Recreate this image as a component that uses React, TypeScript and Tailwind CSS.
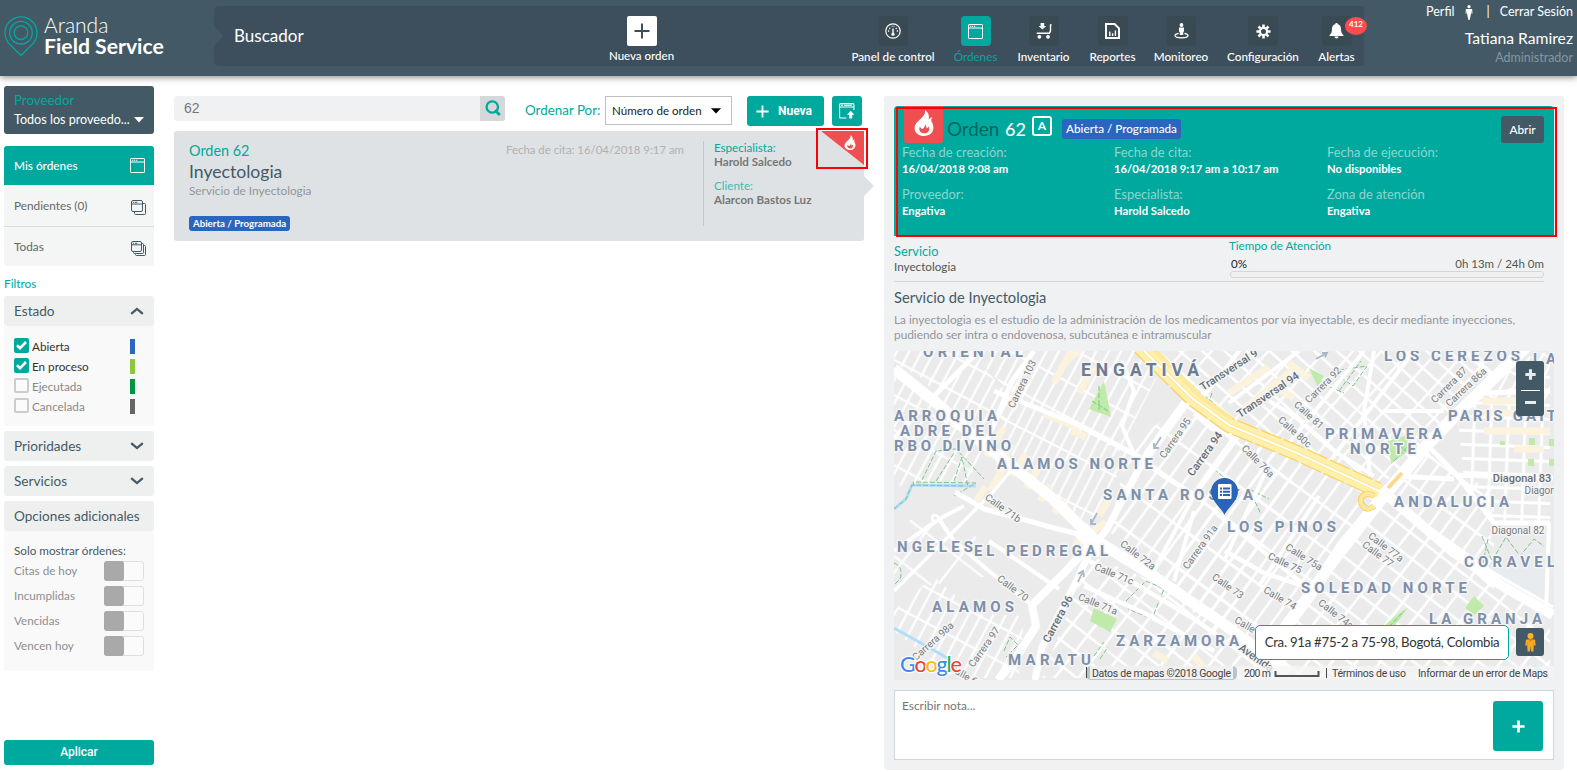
import type { ReactNode } from "react";

/* ---------- icons ---------- */

function WindowIcon({ size = 15, copies = 0 }: { size?: number; copies?: number }) {
  return (
    <svg width={size} height={size} viewBox="0 0 15 15" fill="none" stroke="currentColor" strokeWidth="1">
      {copies === 0 && (
        <>
          <rect x="0.5" y="0.5" width="14" height="14" rx="0.6" />
          <path d="M0.5 4H14.5" />
          <path d="M2 2.3h1.2M4 2.3h1.2M6 2.3h1.2" strokeWidth="1.1" />
        </>
      )}
      {copies > 0 && (
        <>
          <rect x="0.5" y="0.5" width={copies === 1 ? 11 : 10} height={copies === 1 ? 11 : 10} rx="1.5" />
          <path d={copies === 1 ? "M0.5 4h11" : "M0.5 3.8h10"} />
          <path d="M2 2.3h1M3.8 2.3h2.5" />
          {copies === 1 && <path d="M12 3.5h1.5a1 1 0 0 1 1 1v9a1 1 0 0 1-1 1h-9a1 1 0 0 1-1-1V12" />}
          {copies === 2 && (
            <>
              <path d="M10.8 2.5h.7a1 1 0 0 1 1 1v8a1 1 0 0 1-1 1h-8a1 1 0 0 1-1-1v-.8" />
              <path d="M12.8 4.5h.7a1 1 0 0 1 1 1v8a1 1 0 0 1-1 1h-8a1 1 0 0 1-1-1v-.8" />
            </>
          )}
        </>
      )}
    </svg>
  );
}

function GaugeIcon() {
  return (
    <svg width="16" height="16" viewBox="0 0 16 16" fill="none" stroke="#fff">
      <circle cx="8" cy="8" r="7.2" strokeWidth="1.2" />
      <path d="M8 5.5v5" strokeWidth="1.4" />
      <circle cx="8" cy="11.2" r="1.6" fill="#fff" stroke="none" />
      <path d="M3 8h1.2M11.8 8H13M4.3 5l1 .8M11.7 5l-1 .8M6.8 3.3h.7M8.6 3.3h.7" strokeWidth="1.3" />
    </svg>
  );
}

function CartIcon() {
  return (
    <svg width="16" height="16" viewBox="0 0 16 16" fill="#fff">
      <path d="M4.6 0h3.6v3h2L6.4 6.4 2.6 3h2z" />
      <path d="M15.6 1.2h-1.8v6.6l-.8 1.6H.8v1.6h13l1.4-2.8V2.4h.4z" />
      <circle cx="3.4" cy="13.8" r="1.9" />
      <circle cx="12" cy="13.8" r="1.9" />
    </svg>
  );
}

function ReportIcon() {
  return (
    <svg width="15" height="16" viewBox="0 0 15 16" fill="none" stroke="#fff" strokeWidth="2">
      <path d="M1 1h8.6L14 5.4V15H1z" />
      <path d="M4.8 8.5V13M7.6 10.2V13M10.4 7.6V13" strokeWidth="1.4" />
    </svg>
  );
}

function MonitorIcon() {
  return (
    <svg width="15" height="16" viewBox="0 0 15 16" fill="#fff">
      <circle cx="7.5" cy="2" r="1.9" />
      <path d="M5 4.6h5v4.2H9.2V12H5.8V8.8H5z" />
      <path d="M4.6 10.4C2.4 10.8 1 11.6 1 12.6c0 1.400 2.800 2.300 6.500 2.300s6.500-.9 6.500-2.300c0-1-1.400-1.800-3.600-2.200" fill="none" stroke="#fff" strokeWidth="1.3" />
    </svg>
  );
}

function GearIcon() {
  return (
    <svg width="15" height="15" viewBox="0 0 15 15" fill="none" stroke="#fff">
      <circle cx="7.5" cy="7.5" r="3.6" strokeWidth="2.2" />
      <path
        d="M7.5 .4v2.800M7.5 11.800v2.800M.4 7.500h2.800M11.800 7.500h2.800M2.500 2.500l1.900 1.900M10.600 10.600l1.900 1.900M2.500 12.500l1.900-1.900M10.600 4.400l1.900-1.900"
        strokeWidth="2.6"
      />
    </svg>
  );
}

function BellIcon() {
  return (
    <svg width="15" height="16" viewBox="0 0 15 16" fill="#fff">
      <path d="M7.5 0c.8 0 1.200.5 1.200 1.200 2.100.5 3.300 2.200 3.300 4.600 0 3.400.8 4.900 2.500 6.400v.8H.5v-.8C2.200 10.700 3 9.200 3 5.800c0-2.400 1.200-4.100 3.300-4.600C6.300.5 6.700 0 7.500 0z" />
      <path d="M5.400 13.600h4.200c-.2 1.300-1 2-2.100 2s-1.900-.7-2.100-2z" />
    </svg>
  );
}

function PersonIcon() {
  return (
    <svg width="8" height="15" viewBox="0 0 8 15" fill="#fff">
      <circle cx="4" cy="1.7" r="1.6" />
      <path d="M.9 4h6.200l.4 4.500H6.300V6H6v2.800L4.600 15H3.400L2 8.800V6h-.3v2.500H.5z" />
    </svg>
  );
}

function FlameIcon({ w, h, hole }: { w: number; h: number; hole: string }) {
  return (
    <svg width={w} height={h} viewBox="0 0 20 26">
      <path
        d="M11 0c.6 2.500-.4 4.800-3 7.600C4.600 11.200.6 13.400.6 18.200.6 22.800 4.600 26 10 26s9.400-3.200 9.400-8.200c0-3-1.200-4.800-2-6.600-.3-1.500.1-3 .9-4-1.700.3-3.200 1.400-3.700 3.200C15.600 6.400 14.600 2.400 11 0z"
        fill="#fff"
      />
      <path
        d="M6 16.600c-1.300 2.200-.8 4.800 1.100 5.900 1.800 1 4.600 1.100 6.300-.1 1.900-1.300 2.300-3.700 1.300-5.800-.7.9-1.300 1.500-2.200 1.900.1-1.700-.4-2.900-1.500-3.900.1 1.800-.8 3.200-2.400 4.500-1.200-.3-2.200-1.100-2.600-2.500z"
        fill={hole}
      />
    </svg>
  );
}

function Chevron({ up = false }: { up?: boolean }) {
  return (
    <svg width="14" height="8" viewBox="0 0 14 8" fill="none" stroke="#455a64" strokeWidth="2.3">
      <path d={up ? "M1.200 6.800 7 1.900l5.800 4.900" : "M1.200 1.200 7 6.100l5.800-4.900"} />
    </svg>
  );
}

function PlusIcon({ size, width, color }: { size: number; width: number; color: string }) {
  return (
    <svg width={size} height={size} viewBox="0 0 16 16" fill="none" stroke={color} strokeWidth={width}>
      <path d="M8 0.5v15M0.5 8h15" />
    </svg>
  );
}

/* ---------- header ---------- */

function NavItem({ label, width, active = false, children }: { label: string; width: string; active?: boolean; children: ReactNode }) {
  return (
    <div className={`flex flex-col items-center ${width}`}>
      <div className={`flex h-[30px] w-[30px] items-center justify-center rounded-[4px] ${active ? "bg-[#00a99d]" : "bg-[#394a53]"} text-white`}>
        {children}
      </div>
      <span className={`mt-[2px] text-[11.7px] leading-[16px] whitespace-nowrap ${active ? "text-[#00a99d]" : "font-medium text-white"}`}>{label}</span>
    </div>
  );
}

function Header() {
  return (
    <header className="relative z-10 flex h-[76px] bg-[#435a66] shadow-[0_1px_7px_rgba(0,0,0,0.5)]">
      <div className="flex w-[214px] items-start pt-4 pl-1">
        <svg width="34" height="41" viewBox="0 0 34 41" fill="none" stroke="#00a99d" strokeWidth="1.3">
          <path d="M17 39.500 6.300 28.800A16 16 0 1 1 27.700 28.800z" />
          <circle cx="17" cy="16.7" r="11.3" />
          <circle cx="17" cy="16.7" r="6.8" />
        </svg>
        <div className="-mt-[2px] ml-[6px] flex flex-col text-white">
          <span className="text-[21px] leading-[22px] font-light">Aranda</span>
          <span className="text-[21.200px] leading-[20px] font-bold">Field Service</span>
        </div>
      </div>
      <div className="mt-[6px] flex h-[60px] w-[1150px] rounded-l-[5px] bg-[#3d4f5d]">
        <svg width="10" height="60" viewBox="0 0 10 60">
          <path d="M0 20 9.500 30 0 40z" fill="#435a66" />
        </svg>
        <div className="w-[385px] pt-[18px] pl-[10px] text-[17px] leading-6 text-white">Buscador</div>
        <div className="flex w-[65px] flex-col items-center pt-[10px]">
          <div className="flex h-[30px] w-[30px] items-center justify-center rounded-[2px] bg-white">
            <PlusIcon size={16} width={2} color="#3d4f5d" />
          </div>
          <span className="mt-[2px] text-[11.5px] leading-4 font-medium whitespace-nowrap text-white">Nueva orden</span>
        </div>
        <nav className="ml-[178px] flex gap-5 pt-[10px]">
          <NavItem label="Panel de control" width="w-[82px]"><GaugeIcon /></NavItem>
          <NavItem label="Órdenes" width="w-[43px]" active><WindowIcon /></NavItem>
          <NavItem label="Inventario" width="w-[53px]"><CartIcon /></NavItem>
          <NavItem label="Reportes" width="w-[45px]"><ReportIcon /></NavItem>
          <NavItem label="Monitoreo" width="w-[52px]"><MonitorIcon /></NavItem>
          <NavItem label="Configuración" width="w-[72px]"><GearIcon /></NavItem>
          <div className="relative">
            <NavItem label="Alertas" width="w-[35px]"><BellIcon /></NavItem>
            <span className="absolute top-[1px] left-[26px] h-[18px] w-[22px] rounded-[50%] bg-[#ff4b4f] text-center text-[8px] leading-[15px] font-bold text-white">412</span>
          </div>
        </nav>
      </div>
      <div className="flex flex-1 flex-col items-end pr-1 text-white">
        <div className="flex h-6 items-center text-[12.5px]">
          <span>Perfil</span>
          <span className="mr-[14px] ml-[10px]"><PersonIcon /></span>
          <span>|</span>
          <span className="ml-[10px]">Cerrar Sesión</span>
        </div>
        <span className="mt-[4px] text-[15.7px] leading-[20px]">Tatiana Ramirez</span>
        <span className="mt-[2px] text-[12.5px] leading-4 text-[#8496a1]">Administrador</span>
      </div>
    </header>
  );
}

/* ---------- sidebar ---------- */

const estados = [
  { label: "Abierta", on: true, bar: "bg-[#2a66bf]" },
  { label: "En proceso", on: true, bar: "bg-[#8dc63f]" },
  { label: "Ejecutada", on: false, bar: "bg-[#009444]" },
  { label: "Cancelada", on: false, bar: "bg-[#666666]" },
];
const opciones = ["Citas de hoy", "Incumplidas", "Vencidas", "Vencen hoy"];

function PanelTitle({ title, children }: { title: string; children?: ReactNode }) {
  return (
    <div className="flex h-[30px] items-center justify-between rounded-[3px] bg-[#eef0f0] pr-[10px] pl-[10px] text-[13.6px] text-[#455a64]">
      <span className="whitespace-nowrap">{title}</span>
      {children}
    </div>
  );
}

function Sidebar() {
  return (
    <aside className="flex w-[150px] flex-col pt-[10px]">
      <div className="h-12 rounded-[3px] bg-[#435a66] px-[10px] pt-[5px]">
        <div className="text-[13.3px] leading-[19px] text-[#00a99d]">Proveedor</div>
        <div className="flex items-center justify-between text-[12.6px] leading-[19px] text-white">
          <span className="whitespace-nowrap">Todos los proveedo...</span>
          <svg width="10" height="6" viewBox="0 0 10 6"><path d="M0 0h10L5 5.500z" fill="#fff" /></svg>
        </div>
      </div>

      <div className="mt-3 flex flex-col overflow-hidden rounded-[3px] bg-[#f4f6f6] text-[11.8px] text-[#666]">
        <div className="flex h-[39px] items-center justify-between bg-[#00a99d] pr-[9px] pl-[10px] font-medium text-white">
          <span>Mis órdenes</span>
          <WindowIcon />
        </div>
        <div className="flex h-[42px] items-center justify-between border-b border-[#d9dcdd] pr-2 pl-[10px]">
          <span>Pendientes (0)</span>
          <span className="mt-1 text-[#455a64]"><WindowIcon copies={1} /></span>
        </div>
        <div className="flex h-[39px] items-center justify-between pr-2 pl-[10px]">
          <span>Todas</span>
          <span className="mt-[3px] text-[#455a64]"><WindowIcon copies={2} /></span>
        </div>
      </div>

      <div className="mt-[10px] h-5 text-[11.8px] leading-4 text-[#00a99d]">Filtros</div>
      <PanelTitle title="Estado"><Chevron up /></PanelTitle>
      <div className="flex h-[100px] flex-col gap-[5px] bg-[#f9f9f9] pt-3 pr-[19px] pl-[10px]">
        {estados.map((e) => (
          <div key={e.label} className="flex h-[15px] items-center">
            {e.on ? (
              <span className="flex h-[15px] w-[15px] items-center justify-center rounded-[2px] bg-[#00a99d]">
                <svg width="11" height="9" viewBox="0 0 11 9" fill="none" stroke="#fff" strokeWidth="2.6"><path d="M1 4.300 4 7.200 10 1" /></svg>
              </span>
            ) : (
              <span className="h-[15px] w-[15px] rounded-[2px] border-2 border-[#ccc] bg-[#fbfbfb]" />
            )}
            <span className={`mt-[3px] ml-[3px] flex-1 text-[11.7px] ${e.on ? "text-[#333]" : "text-[#888]"}`}>{e.label}</span>
            <span className={`mt-[2px] h-[15px] w-[5px] ${e.bar}`} />
          </div>
        ))}
      </div>
      <div className="mt-[5px] flex flex-col gap-[5px]">
        <PanelTitle title="Prioridades"><Chevron /></PanelTitle>
        <PanelTitle title="Servicios"><Chevron /></PanelTitle>
        <PanelTitle title="Opciones adicionales" />
      </div>
      <div className="flex h-[140px] flex-col gap-[5px] bg-[#f9f9f9] px-[10px] pt-[10px] text-[11.7px]">
        <div className="-mb-[5px] h-5 leading-[19px] text-[#455a64]">Solo mostrar órdenes:</div>
        {opciones.map((o) => (
          <div key={o} className="flex h-5 items-center justify-between text-[#8e8e8e]">
            <span>{o}</span>
            <span className="h-5 w-10 rounded-[3px] border border-[#dedede] bg-[#fbfbfb]">
              <span className="-mt-px -ml-px block h-5 w-5 rounded-[3px] bg-[#a9a9a9]" />
            </span>
          </div>
        ))}
      </div>
      <button className="mt-[69px] h-[25px] rounded-[3px] bg-[#00a99d] pb-[2px] font-[Roboto] text-[12px] font-medium text-white">Aplicar</button>
    </aside>
  );
}

/* ---------- order list ---------- */

function OrderList() {
  return (
    <section className="w-[690px] pt-5">
      <div className="flex h-[30px] items-start">
        <div className="flex h-[25px] w-[331px] overflow-hidden rounded-[3px] bg-[#eff1f2]">
          <span className="flex-1 pl-[10px] font-['Liberation_Sans'] text-[14px] leading-6 text-[#777]">62</span>
          <span className="flex w-[25px] items-center justify-center bg-[#d5d7d9] pb-[2px]">
            <svg width="16" height="16" viewBox="0 0 16 16" fill="none" stroke="#00a99d">
              <circle cx="7.3" cy="7" r="5.7" strokeWidth="2.3" />
              <path d="M10 10.200 14.800 15" strokeWidth="2.8" />
            </svg>
          </span>
        </div>
        <span className="ml-[20px] w-[80px] pt-[3px] text-[13.4px] leading-[22px] whitespace-nowrap text-[#00a99d]">Ordenar Por:</span>
        <div className="flex h-[29px] w-[127px] items-center justify-between border border-[#bfbfbf] bg-white pr-[10px] pl-[6px] text-[11.6px] text-[#222]">
          <span>Número de orden</span>
          <svg width="10" height="6" viewBox="0 0 10 6"><path d="M0 .3h10L5 5.500z" fill="#000" /></svg>
        </div>
        <button className="ml-[15px] flex h-[30px] w-[77px] items-center rounded-[3px] bg-[#00a99d] pl-[9px] font-[Roboto] text-[12px] font-bold text-white">
          <PlusIcon size={13} width={2.2} color="#fff" />
          <span className="ml-[9px]">Nueva</span>
        </button>
        <button className="ml-2 flex h-[30px] w-[30px] items-center justify-center rounded-[3px] bg-[#00a99d]">
          <svg width="16" height="16" viewBox="0 0 16 16" fill="none" stroke="#fff" strokeWidth="1.1">
            <path d="M7.500 15H1.600a1 1 0 0 1-1-1V1.600a1 1 0 0 1 1-1h12.300a1 1 0 0 1 1 1V7M.6 4h14.300M2 2.300h2M5 2.300h8" />
            <path d="m11.700 7.800 3.700 4h-2.200V15.600h-3v-3.800H8z" fill="#fff" stroke="none" />
          </svg>
        </button>
      </div>

      <div className="relative mt-[5px] flex h-[110px] rounded-[3px] bg-[#dee2e5]">
        <div className="w-[250px] pt-[10px] pl-[15px]">
          <div className="text-[14.4px] leading-[19px] text-[#00a99d]">Orden 62</div>
          <div className="text-[17.6px] leading-[24px] text-[#435a66]">Inyectologia</div>
          <div className="text-[11.8px] leading-[14px] text-[#939598]">Servicio de Inyectologia</div>
          <div className="mt-[18px] flex h-[15px] w-[101px] items-center justify-center rounded-[3px] bg-[#2a66bf] text-[9.7px] font-bold whitespace-nowrap text-white">Abierta / Programada</div>
        </div>
        <div className="flex-1 pt-[12px] pr-[19px] text-right text-[11.4px] leading-[14px] text-[#b1b1b1]">Fecha de cita: 16/04/2018 9:17 am</div>
        <div className="mt-[10px] h-[85px] w-[161px] border-l border-[#c3c7ca] pl-[10px] text-[11.6px] leading-[14px]">
          <div className="text-[#00a99d]">Especialista:</div>
          <div className="font-bold text-[#777]">Harold Salcedo</div>
          <div className="mt-[10px] text-[#3dbbb1]">Cliente:</div>
          <div className="font-bold text-[#777]">Alarcon Bastos Luz</div>
        </div>
        <svg className="absolute top-0 right-0" width="43" height="34" viewBox="0 0 43 34"><path d="M0 0h43v34z" fill="#f04f51" /></svg>
        <span className="absolute top-1 right-[8px]"><FlameIcon w={12} h={15} hole="#f04f51" /></span>
        <svg className="absolute top-[45px] -right-[10px]" width="10" height="20" viewBox="0 0 10 20"><path d="M0 0 10 10 0 20z" fill="#dee2e5" /></svg>
        <span className="absolute -top-[3px] -right-1 h-[41px] w-[52px] border-2 border-[#f00]" />
      </div>
    </section>
  );
}

/* ---------- map ---------- */

type Area = { fill: string; points: string };
const areas: Area[] = [
  { fill: "url(#nw)", points: "0,0 75,0 125,55 90,94 25,25 0,12" },
  { fill: "url(#nw)", points: "75,0 245,0 262,28 238,75 225,100 120,45" },
  { fill: "url(#dense)", points: "95,80 125,50 235,102 205,160 190,175 158,147" },
  { fill: "url(#nw)", points: "0,25 90,95 75,130 0,135" },
  { fill: "url(#mid)", points: "235,95 291,51 331,75 400,107 400,130 330,290 258,224 215,180" },
  { fill: "url(#mid)", points: "330,75 486,142 450,194 416,244 365,320 331,274 270,225 300,150" },
  { fill: "url(#ne)", points: "245,0 599,0 533,94 486,135 403,100 331,66 298,45" },
  { fill: "url(#east)", points: "493,144 559,201 656,261 656,327 365,327 416,244" },
  { fill: "url(#ortho)", points: "563,60 656,20 656,170 600,172 570,128" },
  { fill: "url(#mid)", points: "495,140 533,100 565,128 600,135 600,240 559,201" },
  { fill: "url(#nw)", points: "620,10 656,0 656,50 590,50" },
  { fill: "url(#east)", points: "198,205 258,230 331,280 390,327 148,327 184,235" },
  { fill: "url(#nw)", points: "0,260 40,225 80,262 130,265 125,327 60,327 0,280" },
  { fill: "url(#wide)", points: "0,180 30,160 120,205 95,225 30,235 0,250" },
];

const shops = [
  "M170 12 190 -5M160 32l18-34M185 42l14-26M150 62l35 15M178 80l14 6",
  "M92 105l18-28M104 115l14-22M118 125l14-22M132 137l14-22M146 150l10-16M160 162l10-14M96 140l14-24M82 150l10-14",
  "M205 165l12-20M192 185l20-14M180 190l10 6",
  "M335 42l40-26M350 58l50-40M395 12l20 15M380 35l20 12",
  "M585 62h60M590 80h66M588 50h40M620 98h30",
  "M260 302l14 8M275 318l20 8M300 305l10 12",
];

const majorRoads: { d: string; w: number }[] = [
  { d: "M0 18 40 50 91 94 158 147 198 187 258 224 331 274 395 322", w: 11 },
  { d: "M186 178 200 192 210 200", w: 17 },
  { d: "M40 45 85 0M25 60 0 88M92 92 118 30 140 0", w: 5 },
  { d: "M291 51 254 101 213 178 196 200 184 227 166 262 148 296 141 329", w: 7 },
  { d: "M198 192 170 222 138 254 142 275 120 310 104 329", w: 8 },
  { d: "M61 141 90 158 124 167 160 177 196 186", w: 5 },
  { d: "M0 240 60 180 100 140 118 118", w: 3.5 },
  { d: "M70 155 45 168 60 190 95 220 138 254M45 168 0 200M95 190l70 48", w: 4 },
  { d: "M100 40 130 52 180 72 240 103 270 125 310 150", w: 5 },
  { d: "M240 103 228 75 240 40 228 10", w: 4 },
  { d: "M300 63 318 78 345 85 300 145 258 222", w: 4 },
  { d: "M345 0 310 45M405 0 335 52M470 0 395 92M520 0 430 118", w: 4 },
  { d: "M375 50 400 65 440 100 480 125", w: 4 },
  { d: "M632 -4 559 67 533 94 493 141 449 194 416 244 393 274 358 329", w: 12 },
  { d: "M470 60 480 0M470 60 476 125M490 60h60", w: 4 },
  { d: "M493 144 559 201 610 236 659 264", w: 10 },
  { d: "M486 138 540 180 600 222 659 256", w: 3 },
  { d: "M533 94 563 124 659 127M563 124 600 172 656 172M500 125 560 128", w: 5 },
  { d: "M559 67 590 42 656 40M570 0 600 25", w: 5 },
  { d: "M331 200 370 222 425 240M320 160 415 238", w: 4.5 },
  { d: "M195 210 240 232 300 268 345 300M190 235 250 262 320 300", w: 4.5 },
  { d: "M300 160 280 230M372 120 330 210M425 145 365 235", w: 4 },
  { d: "M655 172 652 262", w: 4 },
];

const parks = [
  "M195 58 210 30 217 66z",
  "M200 257 223 268 216 281 196 270z",
  "M415 17 430 25 424 36z",
  "M494 90 512 85 517 98 497 113z",
  "M580 245 590 255 580 264 571 257z",
  "M505 262 514 257 498 278 490 275z",
  "M635 87h6v7h-6zM655 88h5v7h-5zM634 108h6v7h-6zM655 108h5v7h-5zM606 90h5v4h-5z",
];

const trails = [
  "M28 129 42 100 62 98 90 128M42 130l18-28M60 130l8-24 6 30M20 135 19 131 82 132 60 145",
  "M0 158 12 148 18 134 70 135M0 212q10 4 6 16l-6 6",
  "M205 35v24M198 50l16 10",
  "M436 36 450 42M438 20l35-5-14 20zM445 40l22-30",
  "M232 250 252 230 270 238 258 268 234 258M110 300l6-14 8 8-12 12M200 305l10-14M206 308l8-12",
  "M355 138 375 148M355 138l12 25",
  "M588 185 598 210 612 186 626 205 640 188 650 195M594 188l-6 28",
  "M500 90 512 100M500 110 517 92M495 276l15-16",
  "M310 44 322 54M318 42l-4 12M320 118l12 10-8 6",
];

const districts: [string, number, number, number][] = [
  ["ORIENTAL", 29, 6, 97],
  ["ARROQUIA", 0, 70, 100],
  ["ADRE DEL", 6, 85, 93],
  ["RBO DIVINO", 0, 100, 114],
  ["ALAMOS NORTE", 103, 118, 153],
  ["SANTA ROSITA", 209, 149, 147],
  ["NGELES", 3, 201, 73],
  ["EL PEDREGAL", 80, 205, 131],
  ["ALAMOS", 38, 261, 79],
  ["ZARZAMORA", 222, 295, 120],
  ["MARATU", 114, 314, 80],
  ["LOS CEREZOS", 490, 10, 133],
  ["LA", 639, 13, 20],
  ["PARIS GAIT", 554, 70, 105],
  ["PRIMAVERA", 431, 88, 114],
  ["NORTE", 456, 103, 63],
  ["ANDALUCIA", 500, 156, 112],
  ["LOS PINOS", 333, 181, 106],
  ["CORAVEL", 570, 216, 88],
  ["SOLEDAD NORTE", 407, 242, 163],
  ["LA GRANJA", 535, 273, 110],
];

const streets: [string, number, number, number, boolean?][] = [
  ["Carrera 103", 128, 33, -64],
  ["Transversal 9", 335, 19, -33, true],
  ["Transversal 94", 374, 44, -34, true],
  ["Carrera 92", 429, 34, -45],
  ["Calle 81", 415, 64, 42],
  ["Calle 80c", 401, 81, 42],
  ["Calle 76a", 364, 110, 45],
  ["Carrera 87", 555, 34, -45],
  ["Carrera 86a", 572, 36, -43],
  ["Carrera 95", 281, 87, -55],
  ["Carrera 94", 311, 103, -54, true],
  ["Calle 71b", 109, 157, 36],
  ["Calle 72a", 244, 204, 37],
  ["Calle 71c", 220, 223, 22],
  ["Carrera 91a", 306, 196, -54],
  ["Calle 70", 119, 237, 37],
  ["Calle 71a", 204, 253, 22],
  ["Carrera 96", 164, 268, -62, true],
  ["Carrera 98a", 39, 290, -42],
  ["Carrera 97", 90, 296, -55],
  ["Calle 73", 334, 235, 35],
  ["Calle 74", 386, 247, 30],
  ["Calle 74a", 442, 263, 38],
  ["Calle 75", 391, 212, 25],
  ["Calle 75a", 410, 206, 32],
  ["Calle 77a", 492, 196, 37],
  ["Calle 77", 484, 203, 37],
  ["Calle 72", 357, 277, 30],
  ["Avenida", 362, 307, 35, true],
  ["Diagonal 83", 628, 127, 0, true],
  ["Diagonal 83", 657, 139, 0],
  ["Diagonal 82", 624, 179, 0],
  ["Calle 66", 72, 325, 30],
];

function StreetGrid({ id, angle, a, b, w }: { id: string; angle: number; a: number; b: number; w: number }) {
  return (
    <pattern id={id} width={a} height={b} patternUnits="userSpaceOnUse" patternTransform={`rotate(${angle})`}>
      <path d={`M${a / 4} 0V${b}M0 ${b / 4}H${a}`} stroke="#fff" strokeWidth={w} fill="none" />
    </pattern>
  );
}

function MapDrawing() {
  return (
    <svg width="660" height="329" viewBox="0 0 660 329" className="block" fontFamily="Roboto, sans-serif">
      <defs>
        <StreetGrid id="nw" angle={28} a={11} b={31} w={2.2} />
        <StreetGrid id="dense" angle={27} a={10} b={44} w={2} />
        <StreetGrid id="mid" angle={36} a={14} b={34} w={2.5} />
        <StreetGrid id="ne" angle={42} a={21} b={15} w={2.3} />
        <StreetGrid id="east" angle={38} a={19} b={20} w={2.6} />
        <StreetGrid id="ortho" angle={2} a={17} b={14} w={2.8} />
        <StreetGrid id="wide" angle={38} a={42} b={38} w={2.2} />
      </defs>
      <rect width="660" height="329" fill="#ebebeb" />
      {areas.map((a, i) => <polygon key={i} points={a.points} fill={a.fill} />)}
      <path d="M598 222 625 200 656 190 656 258z" fill="#e8ecef" />
      {shops.map((d, i) => <path key={i} d={d} stroke="#fcf3df" strokeWidth="7" fill="none" />)}
      {parks.map((d, i) => <path key={i} d={d} fill="#bfeaaa" />)}
      <path d="M0 158 12 148 18 134 82 135M0 277 50 305 75 325M640 315l18 14" stroke="#b3ddfc" strokeWidth="3" fill="none" />
      {trails.map((d, i) => <path key={i} d={d} stroke="#7cc48a" strokeWidth="1" strokeDasharray="5 2" fill="none" />)}
      {majorRoads.map((r, i) => <path key={i} d={r.d} stroke="#fff" strokeWidth={r.w} strokeLinejoin="round" fill="none" />)}
      <circle cx="41" cy="167" r="3" fill="#ebebeb" stroke="#fff" strokeWidth="2.5" />
      <g fill="none" strokeLinejoin="round">
        <path d="M246 -4 298 47 335 74 403 102 484 139" stroke="#fbd062" strokeWidth="16" strokeDasharray="22 3" />
        <path d="M246 -4 298 47 335 74 403 102 486 140" stroke="#fff0ab" strokeWidth="13.5" />
        <path d="M246 -4 298 47 335 74 403 102 484 139M258 -4 306 45 338 68" stroke="#fde99c" strokeWidth="4.5" />
        <path d="M246 -4 298 47 335 74 403 102 498 146" stroke="#fff" strokeWidth="1.8" />
        <path d="M480 145c-10-6-17 3-11 10 3 4 8 3 11 0" stroke="#fbd062" strokeWidth="6" />
        <path d="M480 145c-10-6-17 3-11 10 3 4 8 3 11 0" stroke="#ffe9a0" strokeWidth="4" />
        <path d="M494 137 508 122" stroke="#fbd98a" strokeWidth="4" />
      </g>
      <g fill="none" stroke="#a9b7c8" strokeWidth="1.8">
        <path d="M267 86 260 97m0-5v5h5M203 162 197 173m0-5v5h5M184 231 189 220m-5 3 5-3 1 6M422 8 433 2m-5 0h5l-2 4" />
      </g>
      <g stroke="#f5f5f5" strokeWidth="3" strokeLinejoin="round" style={{ paintOrder: "stroke" }}>
        {streets.map(([t, x, y, r, bold], i) => (
          <text key={i} textAnchor="middle" transform={`translate(${x} ${y}) rotate(${r})`} dy="3.5" fontSize={bold ? 11 : 10} fontWeight={bold ? 500 : 400} fill={bold ? "#666d73" : "#767b80"}>{t}</text>
        ))}
        {districts.map(([t, x, y, w], i) => (
          <text key={i} x={x} y={y} textLength={w + 3} fontSize="15" fontWeight="700" fill="#7e8faa">{t}</text>
        ))}
        <text x="187" y="25" textLength="118" fontSize="17.5" fontWeight="700" fill="#6b7b90">ENGATIVÁ</text>
      </g>

      <path d="M330.500 164c-2-6-13.500-13.500-13.500-23.500a13.500 13.500 0 0 1 27 0c0 10-11.500 17.500-13.500 23.500z" fill="#2864b9" />
      <rect x="324" y="133" width="13.5" height="15" rx="1" fill="#fff" />
      <path d="M326 137.500h2M329 137.500h7M326 140.800h2M329 140.800h7M326 144h2M329 144h7" stroke="#2864b9" strokeWidth="1.9" />

      <text x="6" y="321" textLength="62" fontSize="21.5" fontFamily="Lato, sans-serif" fontWeight="500" stroke="#fff" strokeWidth="2.5" style={{ paintOrder: "stroke" }}>
        <tspan fill="#4285f4">G</tspan><tspan fill="#ea4335">o</tspan><tspan fill="#fbbc05">o</tspan><tspan fill="#4285f4">g</tspan><tspan fill="#34a853">l</tspan><tspan fill="#ea4335">e</tspan>
      </text>

      <rect x="343" y="315" width="317" height="14" fill="#f5f5f5" fillOpacity="0.75" />
      <rect x="192" y="315" width="151" height="14" rx="5" fill="#b9c3c9" />
      <rect x="196" y="315" width="143" height="13" fill="#f0f0f0" />
      <path d="M192.500 316v11M432.500 317v10" stroke="#444" />
      <path d="M381.500 320v5h43v-5" fill="none" stroke="#555" strokeWidth="2" />
      <g fontSize="10.5" fill="#444">
        <text x="198" y="326" textLength="139">Datos de mapas ©2018 Google</text>
        <text x="350" y="326" textLength="27">200 m</text>
        <text x="438" y="326" textLength="74">Términos de uso</text>
        <text x="524" y="326" textLength="130">Informar de un error de Maps</text>
      </g>
    </svg>
  );
}

function MapPanel() {
  return (
    <div className="relative h-[329px] w-[660px] overflow-hidden">
      <MapDrawing />
      <div className="absolute top-[10px] right-[10px] flex h-[55px] w-7 flex-col items-center justify-between rounded-[3px] bg-[#435a66] pt-[8px] pb-[12px]">
        <PlusIcon size={11} width={4.5} color="#e8ecee" />
        <span className="h-px w-[19px] bg-white" />
        <span className="h-[3px] w-[11px] bg-[#e8ecee]" />
      </div>
      <div className="absolute right-[45px] bottom-5 flex h-[35px] w-[254px] items-center justify-center rounded-[5px] border border-[#00a99d] bg-white text-[13.2px] tracking-[-0.25px] whitespace-nowrap text-[#333]">
        Cra. 91a #75-2 a 75-98, Bogotá, Colombia
      </div>
      <div className="absolute right-[10px] bottom-6 flex h-7 w-7 items-center justify-center rounded-[3px] bg-[#435a66]">
        <svg width="11" height="19" viewBox="0 0 11 19">
          <circle cx="5.5" cy="3" r="3" fill="#fbb62c" />
          <path d="M1 6.500h9l.7 6H9V9l-.6 9.600H6.100L5.500 13l-.6 5.600H2.600L2 9v3.500H.3z" fill="#f7a823" />
          <path d="M3.500 6.500h4L5.500 9z" fill="#d98310" />
        </svg>
      </div>
    </div>
  );
}

/* ---------- order detail ---------- */

const fields: [string, string][] = [
  ["Fecha de creación:", "16/04/2018 9:08 am"],
  ["Fecha de cita:", "16/04/2018 9:17 am a 10:17 am"],
  ["Fecha de ejecución:", "No disponibles"],
  ["Proveedor:", "Engativa"],
  ["Especialista:", "Harold Salcedo"],
  ["Zona de atención", "Engativa"],
];

function OrderDetail() {
  return (
    <section className="mt-5 h-[674px] w-[680px] rounded-[3px] bg-[#eff1f3] px-[10px] pt-[10px]">
      <div className="relative h-[130px] rounded-t-[4px] bg-[#00a99d]">
        <div className="flex h-[37px] pl-[10px]">
          <span className="flex w-[39px] items-center justify-center rounded-b-[3px] bg-[#f04f51] pb-1"><FlameIcon w={20} h={26} hole="#f04f51" /></span>
          <span className="ml-1 w-[58px] pt-[10px] text-[18.8px] leading-[26px] text-[#00665f]">Orden</span>
          <span className="w-[27px] pt-[10px] text-[18px] leading-[26px] font-medium text-white">62</span>
          <span className="mt-[10px] flex h-5 w-5 items-center justify-center rounded-[3px] border-2 border-white text-[12px] font-bold text-white">A</span>
          <span className="mt-[13px] ml-[10px] flex h-5 w-[119px] items-center justify-center rounded-[3px] bg-[#2a66bf] text-[11.7px] font-medium whitespace-nowrap text-white">Abierta / Programada</span>
          <span className="mt-[10px] mr-[10px] ml-auto flex h-[27px] w-[43px] items-center justify-center rounded-[3px] bg-[#435a66] text-[11.8px] font-medium text-white">Abrir</span>
        </div>
        <div className="grid grid-cols-[212px_213px_1fr] gap-y-[9px] pt-[1px] pl-2">
          {fields.map(([k, v]) => (
            <div key={k}>
              <div className="text-[12.9px] leading-[17px] text-[#8ed5cf]">{k}</div>
              <div className="text-[11.3px] leading-[16px] font-bold text-white">{v}</div>
            </div>
          ))}
        </div>
        <span className="absolute top-[1px] left-[2px] h-[130px] w-[661px] border-2 border-[#f00]" />
      </div>
      <div className="mr-[10px] flex h-[46px] justify-between border-b border-[#d3d6d8]">
        <div className="pt-[7px]">
          <div className="text-[12.8px] leading-[16px] text-[#00a99d]">Servicio</div>
          <div className="text-[11.7px] leading-[15px] text-[#555]">Inyectologia</div>
        </div>
        <div className="w-[314px] pt-[2px]">
          <div className="-ml-px text-[11.6px] leading-[16px] text-[#00a99d]">Tiempo de Atención</div>
          <div className="flex h-[17px] items-end justify-between text-[11.5px] leading-[14px] text-[#555]">
            <span className="pl-px text-[#222]">0%</span>
            <span>0h 13m / 24h 0m</span>
          </div>
          <div className="h-[7px] rounded-[3px] border border-[#d6d6d6] bg-[#f1f1f1]" />
        </div>
      </div>
      <h2 className="mt-[5px] text-[14.7px] leading-[20px] text-[#435a66]">Servicio de Inyectologia</h2>
      <p className="mt-[5px] h-[39px] w-[640px] text-[11.85px] leading-[15px] text-[#949599]">
        La inyectologia es el estudio de la administración de los medicamentos por vía inyectable, es decir mediante inyecciones,
        <br />
        pudiendo ser intra o endovenosa, subcutánea e intramuscular
      </p>
      <MapPanel />
      <div className="mt-[10px] flex h-[70px] justify-between border border-[#d2d5d7] bg-white pr-[10px] pl-[7px]">
        <span className="pt-[7px] text-[11.9px] leading-[15px] text-[#757575]">Escribir nota...</span>
        <button className="mt-[10px] flex h-[50px] w-[50px] items-center justify-center rounded-[3px] bg-[#00a99d]">
          <PlusIcon size={13} width={3.3} color="#fff" />
        </button>
      </div>
    </section>
  );
}

export default function App() {
  return (
    <div className="h-[772px] w-[1577px] overflow-hidden bg-white font-['Lato','Noto_Sans',sans-serif]">
      <Header />
      <main className="flex pl-1">
        <Sidebar />
        <div className="w-5" />
        <OrderList />
        <div className="w-5" />
        <OrderDetail />
      </main>
    </div>
  );
}
